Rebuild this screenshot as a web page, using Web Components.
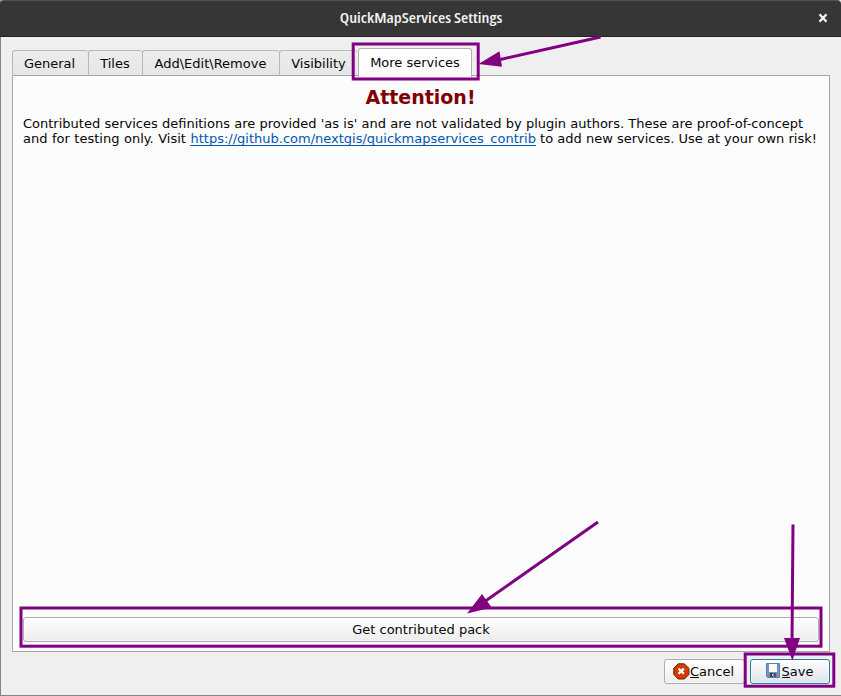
<!DOCTYPE html>
<html lang="en">
<head>
<meta charset="utf-8">
<title>QuickMapServices Settings</title>
<style>
html,body{margin:0;height:100%;overflow:hidden;background:#efefef}
</style>
</head>
<body>
<settings-window>
  <title-bar slot="title">QuickMapServices Settings</title-bar>
  <tab-strip slot="tabs">
    <tab-item style="width:76px;padding-right:2px">General</tab-item>
    <tab-item style="width:54px">Tiles</tab-item>
    <tab-item style="width:137px;padding-right:1px">Add\Edit\Remove</tab-item>
    <tab-item style="width:78px;padding-right:0">Visibility</tab-item>
    <tab-item selected style="width:114px">More services</tab-item>
  </tab-strip>
  <services-pane slot="pane"></services-pane>
  <push-button slot="actions" style="width:81px;padding-right:2px"><stop-icon slot="icon"></stop-icon><u>C</u>ancel</push-button>
  <push-button slot="actions" primary style="width:80px;padding-right:1px"><disk-icon slot="icon"></disk-icon><u>S</u>ave</push-button>
  <callout-layer slot="overlay"></callout-layer>
</settings-window>
<script>
const define = (name, html) => customElements.define(name, class extends HTMLElement {
  constructor() {
    super();
    this.attachShadow({ mode: 'open' }).innerHTML = html;
  }
});

define('settings-window', `<style>
:host{display:flex;flex-direction:column;position:relative;box-sizing:border-box;width:841px;height:696px;background:#efefef;border-left:1px solid #858585;border-bottom:1px solid #858585;font:13px/15px "DejaVu Sans",sans-serif;color:#060606}
main{flex:1;display:flex;flex-direction:column;padding:11px 11px 11px 11px;min-height:0}
.pane{height:577px;display:flex}
footer{display:flex;justify-content:flex-end;gap:5px;margin-top:7px}
</style>
<slot name="title"></slot>
<main><slot name="tabs"></slot><div class="pane"><slot name="pane"></slot></div>
<footer><slot name="actions"></slot></footer></main>
<slot name="overlay"></slot>`);

define('title-bar', `<style>
:host{display:grid;grid-template-columns:36px 1fr 36px;align-items:center;height:37px;box-sizing:border-box;background:#363636;border-top:1px solid #505050;border-bottom:1px solid #242424;border-radius:4px 4px 0 0;margin-left:-1px;color:#f2f2f2}
.t{grid-column:2;justify-self:center;font:600 14.5px/18px "Open Sans",sans-serif;font-stretch:75%;white-space:nowrap;padding:0 0 2px 2px}
.t span{display:inline-block;transform:scaleX(1.145)}
svg{display:block;justify-self:center;margin-bottom:2px}
</style><div class="t"><span><slot></slot></span></div>
<svg width="10" height="10" viewBox="0 0 10 10"><path d="M1.5 1.3 8.5 8.7M8.5 1.3 1.5 8.7" stroke="#f6f6f6" stroke-width="2.3"/></svg>`);

define('tab-strip', `<style>
:host{display:flex;align-items:flex-end;height:28px;position:relative;z-index:1;margin-bottom:-1px}
</style><slot></slot>`);

define('tab-item', `<style>
:host{display:flex;align-items:center;justify-content:center;box-sizing:border-box;height:26px;padding-right:1px;border:1px solid #b8b8b8;border-right:0;border-bottom-color:#a5a5a5;border-radius:3px 3px 0 0;background:linear-gradient(#ececec,#e6e6e6);white-space:nowrap}
:host([selected]){height:29px;margin:0 0 -1px 1px;padding:0 0 1px 0;border:1px solid #b0b0b0;border-bottom:0;background:linear-gradient(#fff,#fcfcfc)}
</style><slot></slot>`);

define('services-pane', `<style>
:host{flex:1;display:flex;flex-direction:column;box-sizing:border-box;border:1px solid #a7a7a7;background:#fcfcfc;padding:9px 10px 9px 10px}
h2{margin:0;padding-right:1px;text-align:center;font:bold 19px/24px "DejaVu Sans",sans-serif;color:#800000}
p{margin:7px 0 0;white-space:nowrap}
.a{word-spacing:.11px}.b{word-spacing:.38px}
a{color:#0057ae;text-decoration:none;display:inline-block;height:14px;border-bottom:1px solid #0057ae;vertical-align:top}
push-button{margin-top:auto}
</style>
<h2>Attention!</h2>
<p><span class="a">Contributed services definitions are provided 'as is' and are not validated by plugin authors. These are proof-of-concept</span><br><span class="b">and for testing only. Visit </span><a>https://github.com/nextgis/quickmapservices_contrib</a> to add new services. Use at your own risk!</p>
<push-button>Get contributed pack</push-button>`);

define('push-button', `<style>
:host{display:flex;align-items:center;justify-content:center;box-sizing:border-box;height:25px;border:1px solid #adadad;border-radius:3px;background:linear-gradient(#fff,#ececec);white-space:nowrap;box-shadow:inset 0 0 0 1px #fff8}
:host([primary]){border-color:#2a7aa8;background:linear-gradient(#fdfeff,#dde4ea)}
::slotted(u){text-decoration:none;height:13px;margin-bottom:2px;box-shadow:0 1px 0 #060606}
</style><slot name="icon"></slot><slot></slot>`);

define('stop-icon', `<style>:host{display:block;width:17px;height:17px}svg{display:block}</style>
<svg width="17" height="17" viewBox="0 0 17 17"><path d="M5.2.8h6.2l4.5 4.5v6.2l-4.5 4.5H5.2L.8 11.5V5.3z" fill="#d43b02" stroke="#702000"/><path d="m5.6 5.6 5.2 5.2m0-5.2-5.2 5.2" stroke="#fff" stroke-width="2.3"/></svg>`);

define('disk-icon', `<style>:host{display:block;width:16px;height:16px;margin-bottom:1px}svg{display:block}</style>
<svg width="16" height="16" viewBox="0 0 16 16"><path d="M.5.5h13v14h-12l-1-1z" fill="#7196c6" stroke="#5d80ae"/><path d="M3 1h8v8H3z" fill="#f8fafc"/><path d="M3 10h8v4H3z" fill="#7d848a"/><path d="M4 10h3v4H4z" fill="#38434b"/><path d="M6 11h1v2H6z" fill="#c9ced1"/><path d="M8 10h2v4H8z" fill="#4b555c"/></svg>`);

define('callout-layer', `<style>:host{position:absolute;inset:0 0 0 -1px;z-index:5;pointer-events:none}svg{display:block}</style>
<svg width="841" height="696" viewBox="0 0 841 696" fill="none" stroke="#800080" stroke-width="3">
<rect x="353.2" y="44" width="125" height="35"/><rect x="21" y="608" width="800" height="38.2"/><rect x="745.2" y="654" width="88.6" height="32.2"/>
<path d="M600.5 37 497 60.2M598 522 484 602M793 524.5 792 642"/>
<path d="m478.5 64 21-12.7 2.5 15.5zM467 613.5l15-19.6 9.7 13.6zM784 638h16l-7.6 22.5z" fill="#800080" stroke="none"/>
</svg>`);
</script>
</body>
</html>
